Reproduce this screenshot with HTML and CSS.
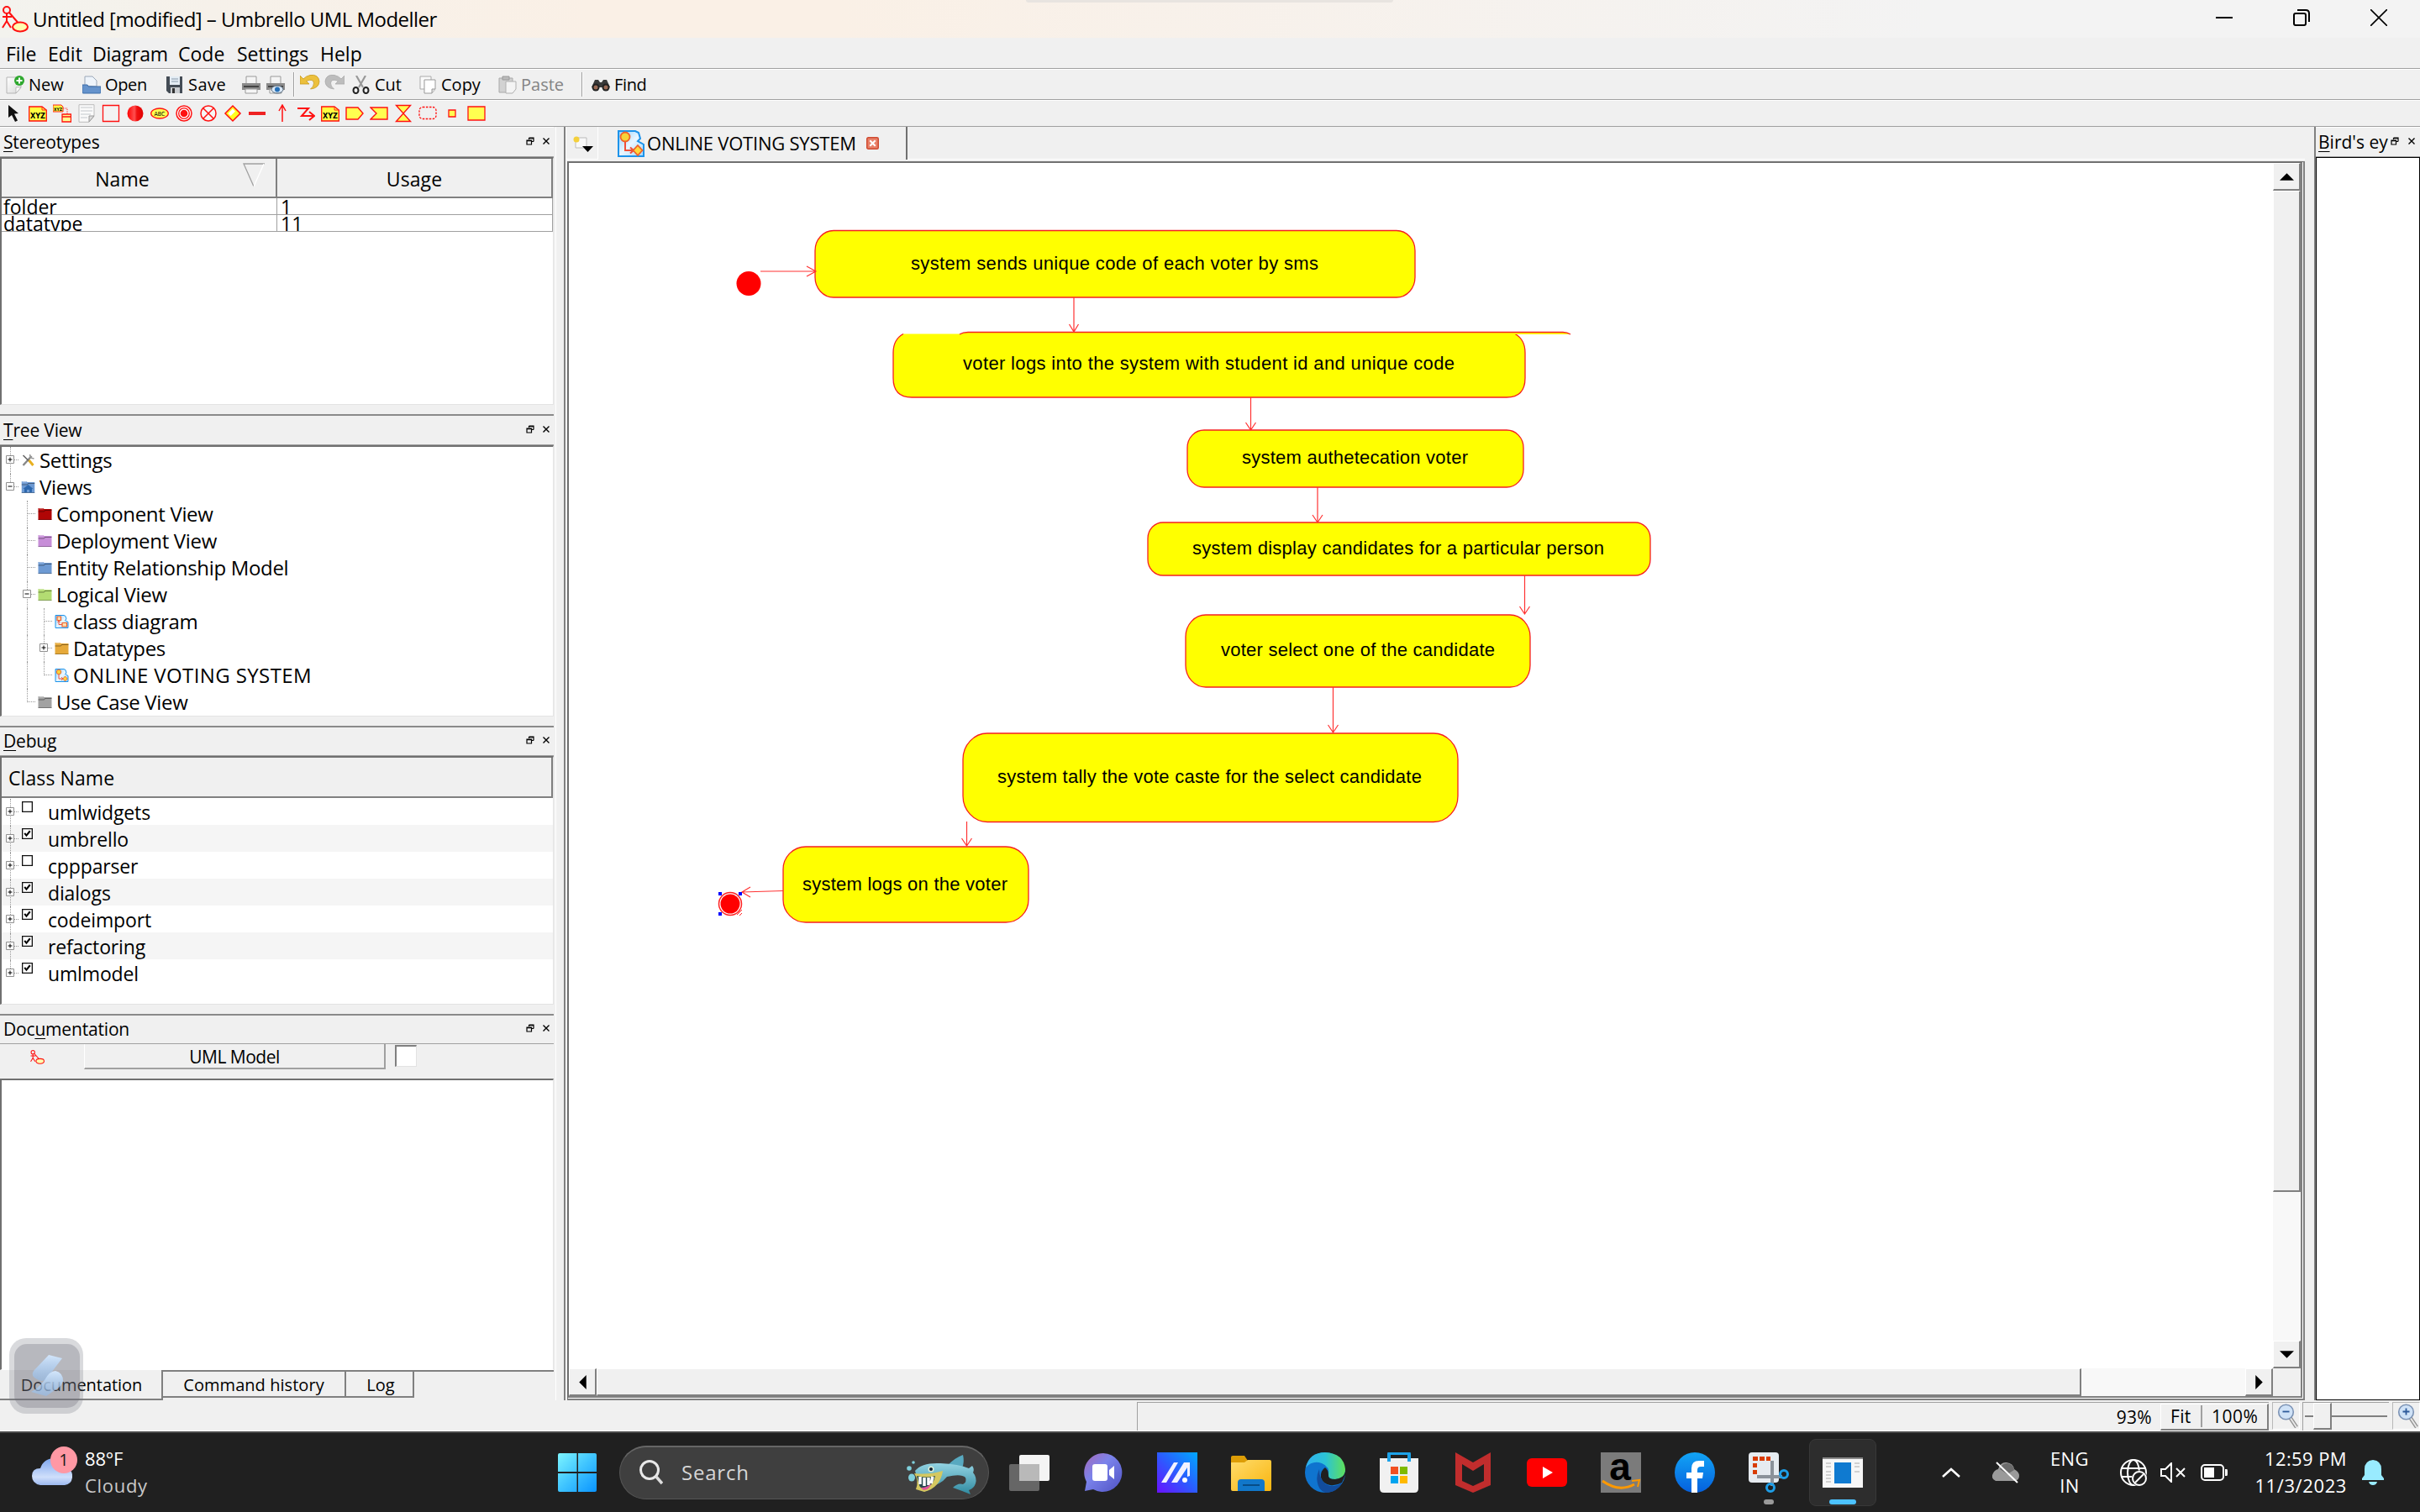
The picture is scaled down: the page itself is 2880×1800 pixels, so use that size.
FILE: index.html
```html
<!DOCTYPE html>
<html lang="en">
<head>
<meta charset="utf-8">
<title>Untitled [modified] – Umbrello UML Modeller</title>
<link rel="stylesheet" href="styles.css">
</head>
<body>
<svg class="defs" width="0" height="0">
  <defs>
    <linearGradient id="blueSheet" x1="0" y1="0" x2="1" y2="1"><stop offset="0" stop-color="#8fd0ff"/><stop offset=".5" stop-color="#eaf6ff"/><stop offset="1" stop-color="#9fd8ff"/></linearGradient>
    <linearGradient id="paper" x1="0" y1="0" x2="1" y2="1"><stop offset="0" stop-color="#fff"/><stop offset="1" stop-color="#d8d8d8"/></linearGradient>
    <linearGradient id="win" x1="0" y1="0" x2="1" y2="1"><stop offset="0" stop-color="#7df5ff"/><stop offset=".5" stop-color="#3fc4ff"/><stop offset="1" stop-color="#0a94ff"/></linearGradient>
    <linearGradient id="cloud" x1="0" y1="0" x2="0" y2="1"><stop offset="0" stop-color="#7ea6ee"/><stop offset=".7" stop-color="#cfdffb"/><stop offset="1" stop-color="#9db9ef"/></linearGradient>
    <linearGradient id="edgeA" x1="0" y1="0" x2="1" y2="0"><stop offset="0" stop-color="#2fb0f0"/><stop offset=".5" stop-color="#2cc3d5"/><stop offset="1" stop-color="#5fe05a"/></linearGradient>
    <linearGradient id="chat" x1="0" y1="0" x2="1" y2="1"><stop offset="0" stop-color="#a768b8"/><stop offset=".4" stop-color="#7b83eb"/><stop offset="1" stop-color="#4f52c4"/></linearGradient>
    <linearGradient id="mm" x1="0" y1="1" x2="1" y2="0"><stop offset="0" stop-color="#6a11ff"/><stop offset=".5" stop-color="#2b5cff"/><stop offset="1" stop-color="#00a8ff"/></linearGradient>
    <linearGradient id="fold" x1="0" y1="0" x2="1" y2="1"><stop offset="0" stop-color="#ffdc6b"/><stop offset="1" stop-color="#f9b50f"/></linearGradient>
    <linearGradient id="fb" x1="0" y1="0" x2="0" y2="1"><stop offset="0" stop-color="#12a4f5"/><stop offset="1" stop-color="#0560dd"/></linearGradient>
    <linearGradient id="fish" x1="0" y1="0" x2="0" y2="1"><stop offset="0" stop-color="#93d3e2"/><stop offset="1" stop-color="#2f8aa0"/></linearGradient>
    <linearGradient id="redball" x1="0" y1="0" x2="1" y2="0"><stop offset="0" stop-color="#f00"/><stop offset=".45" stop-color="#ff5050"/><stop offset=".6" stop-color="#f01010"/><stop offset="1" stop-color="#e00000"/></linearGradient>

    <symbol id="umbrello" viewBox="0 0 32 32"><g fill="none" stroke="#f11" stroke-width="2"><circle cx="6" cy="5" r="4"/><path d="M6 9v10M1 13h11M6 18L1 26M6 18l5 8M9 8L22 23"/><ellipse cx="22" cy="25" rx="9" ry="5.500" fill="#ffffb0"/></g></symbol>
    <symbol id="new" viewBox="0 0 22 22"><path d="M1 2h17v12l-6 7H1z" fill="url(#paper)" stroke="#b5b5b5"/><path d="M18 14l-6 7v-7z" fill="#fff" stroke="#aaa" stroke-width=".7"/><circle cx="16" cy="6" r="6" fill="#2fa82f"/><path d="M16 2.500v7M12.500 6h7" stroke="#fff" stroke-width="2"/></symbol>
    <symbol id="open" viewBox="0 0 22 22"><path d="M3 12V1h9l5 5v7z" fill="#eef4fb" stroke="#9aa7b8"/><path d="M0 11h6l1 2h15v7q0 1-1 1H1q-1 0-1-1z" fill="#6593cc" stroke="#3d6ca8"/></symbol>
    <symbol id="save" viewBox="0 0 22 22"><path d="M1 1h19v20H4l-3-3z" fill="#444c55"/><path d="M5 1h12v10H5z" fill="#e4ecf4"/><path d="M7 4h8M7 7h8" stroke="#89a"/><path d="M6 14h11v7H6z" fill="#c9ccd0"/><path d="M8 15h3v6H8z" fill="#333"/></symbol>
    <symbol id="print" viewBox="0 0 22 22"><path d="M5 1h12v9H5z" fill="#f4f4f4" stroke="#999"/><path d="M0 9h22v8H0z" fill="#8a8a8a"/><path d="M2 12h18v2H2z" fill="#444"/><path d="M4 16h14v5H4z" fill="#f5f5f5" stroke="#999"/></symbol>
    <symbol id="preview" viewBox="0 0 22 22"><use href="#print" width="22" height="22"/><ellipse cx="13" cy="16.500" rx="7" ry="4.500" fill="#d9e7f5" stroke="#567"/><circle cx="13" cy="16.500" r="3" fill="#2670b8"/></symbol>
    <symbol id="undo" viewBox="0 0 24 22"><path d="M0 2v10h11L7.500 8.500Q16 5 16.500 11q0 4-4 7 10-1 10.500-9Q22 0 12 1.500 7 2.500 4 6z" fill="#ecc03c" stroke="#c89a1c" stroke-width=".8"/></symbol>
    <symbol id="redo" viewBox="0 0 24 22"><path d="M24 2v10H13l3.500-3.500Q8 5 7.500 11q0 4 4 7Q1.500 17 1 9 2 0 12 1.500q5 1 8 4.500z" fill="#bdbdbd" stroke="#a8a8a8" stroke-width=".8"/></symbol>
    <symbol id="cut" viewBox="0 0 22 22"><path d="M5 0l8 14M16 0L8 14" stroke="#999" stroke-width="2.200"/><g fill="none" stroke="#222" stroke-width="2"><ellipse cx="4.500" cy="17.500" rx="3" ry="3.500"/><ellipse cx="16.500" cy="17.500" rx="3" ry="3.500"/></g></symbol>
    <symbol id="copy" viewBox="0 0 22 22"><path d="M2 1h13v15H2z" fill="#fafafa" stroke="#aaa"/><path d="M7 5h13v11l-4 5H7z" fill="#fff" stroke="#999"/><path d="M20 16h-4v5" fill="#ddd" stroke="#999"/></symbol>
    <symbol id="paste" viewBox="0 0 22 22"><path d="M1 3h16v17H1z" fill="#d2d2d2" stroke="#aaa"/><path d="M5 1h8v4H5z" fill="#bbb" stroke="#999"/><path d="M9 7h12v9l-4 5H9z" fill="#f4f4f4" stroke="#b0b0b0"/></symbol>
    <symbol id="find" viewBox="0 0 22 22"><path d="M4 5h4l2 3h2l2-3h4l4 9H0z" fill="#3a3a3a"/><circle cx="5" cy="14" r="4.500" fill="#222"/><circle cx="17" cy="14" r="4.500" fill="#222"/><circle cx="5" cy="14" r="2.500" fill="#9a6a55"/><circle cx="17" cy="14" r="2.500" fill="#9a6a55"/></symbol>

    <symbol id="cursor" viewBox="0 0 22 22"><path d="M5 1v15l4-3 4 8 3-1.500-4-8 5-.5z" fill="#111"/></symbol>
    <symbol id="xyz" viewBox="0 0 22 22"><path d="M.7 3h15.300l5.300 4v13H.7z" fill="#ffff40" stroke="#f11" stroke-width="1.300"/><path d="M16 3v4h5" fill="none" stroke="#f22"/><text x="11" y="17" text-anchor="middle" class="glyph-xyz">XYZ</text></symbol>
    <symbol id="xyz2" viewBox="0 0 22 22"><path d="M0 1h10l2 2v6H0z" fill="#ffff40" stroke="#f22"/><text x="6" y="8" text-anchor="middle" class="glyph-mini">XYZ</text><path d="M12 5h5v6" fill="none" stroke="#f22" stroke-dasharray="1 1"/><path d="M11 12h10.500v9H11zM11 15h11" fill="#ffff90" stroke="#f11" stroke-width="1.300"/></symbol>
    <symbol id="note" viewBox="0 0 22 22"><path d="M2 .7h18V14l-6 7.300H2z" fill="#fafafa" stroke="#bbb"/><path d="M4 4h14M4 8h14M4 12h12M4 16h8" stroke="#c4c8cc"/><path d="M20 14l-6 7v-7z" fill="#ddd" stroke="#999"/></symbol>
    <symbol id="rect" viewBox="0 0 22 22"><path d="M1.500 1.500h19v19h-19z" fill="#f3f3f3" stroke="#f11" stroke-width="1.300"/></symbol>
    <symbol id="ball" viewBox="0 0 22 22"><circle cx="11" cy="11" r="9.500" fill="url(#redball)"/></symbol>
    <symbol id="abc" viewBox="0 0 22 22"><ellipse cx="11" cy="11" rx="10.300" ry="6" fill="#ffff50" stroke="#f11" stroke-width="1.300"/><text x="11" y="13.700" text-anchor="middle" class="glyph-abc">ABC</text></symbol>
    <symbol id="target" viewBox="0 0 22 22"><circle cx="11" cy="11" r="9" fill="#fff" stroke="#f11" stroke-width="1.500"/><circle cx="11" cy="11" r="6.300" fill="#fff" stroke="#f11" stroke-width="1.300"/><circle cx="11" cy="11" r="4.300" fill="#f11"/></symbol>
    <symbol id="flowend" viewBox="0 0 22 22"><circle cx="11" cy="11" r="9" fill="#f6f6f6" stroke="#f11" stroke-width="1.500"/><path d="M5 5l12 12M17 5L5 17" stroke="#f11" stroke-width="1.500"/></symbol>
    <symbol id="diamond" viewBox="0 0 22 22"><path d="M11 2l9 9-9 9-9-9z" fill="#ffff20" stroke="#f11" stroke-width="1.500"/><path d="M11 5.500l3 3-5.500 5.500-3-3z" fill="#fff"/></symbol>
    <symbol id="bar" viewBox="0 0 22 22"><path d="M1 9h20v4H1z" fill="#e22"/></symbol>
    <symbol id="uparrow" viewBox="0 0 22 22"><path d="M12 21V1M8 8l4-7 4 7" fill="none" stroke="#f11" stroke-width="1.500"/></symbol>
    <symbol id="zig" viewBox="0 0 22 22"><path d="M1 5h13L6 14h15M15 9l6 5-6 5" fill="none" stroke="#f11" stroke-width="2"/></symbol>
    <symbol id="send" viewBox="0 0 22 22"><path d="M1 4h14l6 7-6 7H1z" fill="#ffff50" stroke="#f11" stroke-width="1.400"/></symbol>
    <symbol id="accept" viewBox="0 0 22 22"><path d="M1 4h20v14H1l7-7z" fill="#ffff50" stroke="#f11" stroke-width="1.400"/></symbol>
    <symbol id="timer" viewBox="0 0 22 22"><path d="M2.500 1.500h17l-17 19h17z" fill="#ffff50" stroke="#f11" stroke-width="1.400"/></symbol>
    <symbol id="region" viewBox="0 0 22 22"><rect x="1" y="3.500" width="20" height="14" rx="4" fill="none" stroke="#f11" stroke-width="1.300" stroke-dasharray="2.500 1.500"/></symbol>
    <symbol id="pin" viewBox="0 0 22 22"><path d="M7 7h8v8H7z" fill="#ffff50" stroke="#f11" stroke-width="1.300"/></symbol>
    <symbol id="objnode" viewBox="0 0 22 22"><path d="M1 3h20v16H1z" fill="#ffff50" stroke="#f11" stroke-width="1.300"/></symbol>

    <symbol id="float" viewBox="0 0 10 10"><path d="M3.500 1h5.500v4.500M3.500 1v2M1 4h5.500v5H1z M1 4.700h5.500M3.500 1.700H9M6.500 5.500H9" fill="none" stroke="#000" stroke-width="1.200"/></symbol>
    <symbol id="x" viewBox="0 0 10 10"><path d="M1.500 1.500l7 7M8.500 1.500l-7 7" stroke="#000" stroke-width="1.400"/></symbol>
    <symbol id="plus" viewBox="0 0 10 10"><path d="M.5.500h9v9h-9z" fill="#fff" stroke="#909090"/><path d="M2.500 5h5M5 2.500v5" stroke="#000"/></symbol>
    <symbol id="minus" viewBox="0 0 10 10"><path d="M.5.500h9v9h-9z" fill="#fff" stroke="#909090"/><path d="M2.500 5h5" stroke="#000"/></symbol>
    <symbol id="folder" viewBox="0 0 16 16"><path d="M0 1h6l1 1h9v13H0z" fill="currentColor"/><path d="M0 5h7l1-1.500h8" stroke="#0006" fill="none"/><path d="M0 14.500h16" stroke="#0004"/><path d="M1 1.800h5" stroke="#fff8"/></symbol>
    <symbol id="home" viewBox="0 0 16 16"><use href="#folder" width="16" height="16"/><path d="M8 5l6 5h-1.500v4h-3v-3h-3v3h-3v-4H2z" fill="#2d68ae"/></symbol>
    <symbol id="tools" viewBox="0 0 16 16"><path d="M2 14L12 3" stroke="#888" stroke-width="2.400"/><path d="M2 2l7 7" stroke="#666" stroke-width="1.600"/><path d="M9 8l5 6" stroke="#e8b020" stroke-width="3"/><path d="M10 1l1 4 4 1" fill="none" stroke="#999" stroke-width="1.500"/></symbol>
    <symbol id="diagram" viewBox="0 0 32 32"><path d="M1 1h20l4 2 2 7-3 3 7 4v14H1z" fill="url(#blueSheet)" stroke="#1d93ea" stroke-width="2"/><circle cx="9" cy="8" r="5.500" fill="#f6d33a" stroke="#f0622a" stroke-width="1.800"/><path d="M9 14v10h9M15 20.500l4 3.500-4 3.500" fill="none" stroke="#f0503a" stroke-width="2"/><path d="M24 18l5.500 6-5.500 6-5.500-6z" fill="#ffd83a" stroke="#f0622a" stroke-width="1.800"/></symbol>
    <symbol id="classdia" viewBox="0 0 32 32"><path d="M1 1h20l4 2 2 7-3 3 7 4v14H1z" fill="url(#blueSheet)" stroke="#1d93ea" stroke-width="2"/><path d="M5 4h9v9H5zM17 19h11v9H17z" fill="#ffe0b0" stroke="#f0622a" stroke-width="2.400"/><path d="M9 13v10h8M6 18l3-4 3 4" fill="none" stroke="#f0503a" stroke-width="2"/></symbol>
    <symbol id="checked" viewBox="0 0 12 12"><path d="M.6.600h10.800v10.800H.6z" fill="#fff" stroke="#111" stroke-width="1.200"/><path d="M3 5.500l2 2.500 4-5" fill="none" stroke="#000" stroke-width="1.900"/></symbol>
    <symbol id="unchecked" viewBox="0 0 12 12"><path d="M.6.600h10.800v10.800H.6z" fill="#fff" stroke="#111" stroke-width="1.200"/></symbol>
  </defs>
</svg>

<div class="window">
  <header class="titlebar">
    <svg class="app-icon"><use href="#umbrello"/></svg>
    <h1 class="title">Untitled [modified] – Umbrello UML Modeller</h1>
    <div class="notch"></div>
    <div class="win-buttons">
      <svg viewBox="0 0 20 20"><path d="M0 10h20" stroke="#000" stroke-width="2"/></svg>
      <svg viewBox="0 0 20 20"><rect x="1" y="5" width="14" height="14" rx="2" fill="none" stroke="#000" stroke-width="2"/><path d="M5 1h10q4 0 4 4v10" fill="none" stroke="#000" stroke-width="2"/></svg>
      <svg viewBox="0 0 20 20"><path d="M0 0l20 20M20 0L0 20" stroke="#000" stroke-width="1.600"/></svg>
    </div>
  </header>

  <nav class="menubar">
    <span class="m-file">File</span><span class="m-edit">Edit</span><span class="m-diagram">Diagram</span><span class="m-code">Code</span><span class="m-settings">Settings</span><span>Help</span>
  </nav>

  <div class="toolbar main-tools">
    <button class="tool w91"><svg><use href="#new"/></svg>New</button>
    <button class="tool w99 tight"><svg><use href="#open"/></svg>Open</button>
    <button class="tool w91 loose"><svg><use href="#save"/></svg>Save</button>
    <button class="tool w29"><svg><use href="#print"/></svg></button>
    <button class="tool w32"><svg><use href="#preview"/></svg></button>
    <i class="sep"></i>
    <button class="tool w29"><svg class="wide"><use href="#undo"/></svg></button>
    <button class="tool w33"><svg class="wide"><use href="#redo"/></svg></button>
    <button class="tool w79"><svg><use href="#cut"/></svg>Cut</button>
    <button class="tool w95"><svg><use href="#copy"/></svg>Copy</button>
    <button class="tool w99 disabled"><svg><use href="#paste"/></svg>Paste</button>
    <i class="sep gap-wide"></i>
    <button class="tool tight"><svg><use href="#find"/></svg>Find</button>
  </div>

  <div class="toolbar diagram-tools">
    <svg><use href="#cursor"/></svg><svg><use href="#xyz"/></svg><svg><use href="#xyz2"/></svg><svg><use href="#note"/></svg><svg><use href="#rect"/></svg><svg><use href="#ball"/></svg><svg><use href="#abc"/></svg><svg><use href="#target"/></svg><svg><use href="#flowend"/></svg><svg><use href="#diamond"/></svg><svg><use href="#bar"/></svg><svg><use href="#uparrow"/></svg><svg><use href="#zig"/></svg><svg><use href="#xyz"/></svg><svg><use href="#send"/></svg><svg><use href="#accept"/></svg><svg><use href="#timer"/></svg><svg><use href="#region"/></svg><svg><use href="#pin"/></svg><svg><use href="#objnode"/></svg>
  </div>

  <main class="workspace">
    <aside class="left">
      <section class="dock stereotypes">
        <h2 class="dock-title"><span><u>S</u>tereotypes</span><svg><use href="#float"/></svg><svg><use href="#x"/></svg></h2>
        <div class="sunken">
          <div class="table">
            <div class="th">Name<svg class="sort" viewBox="0 0 26 29"><path d="M26 1H1l12 27" fill="none" stroke="#a0a0a0" stroke-width="1.300"/><path d="M13 28L25 1" stroke="#fff" stroke-width="1.300"/></svg></div><div class="th">Usage</div>
            <div class="td">folder</div><div class="td num">1</div>
            <div class="td">datatype</div><div class="td num">11</div>
          </div>
        </div>
      </section>

      <section class="dock tree-dock">
        <h2 class="dock-title"><span><u>T</u>ree View</span><svg><use href="#float"/></svg><svg><use href="#x"/></svg></h2>
        <div class="sunken tree">
          <div class="row"><i class="rail run"><svg class="exp"><use href="#plus"/></svg></i><svg class="ico"><use href="#tools"/></svg>Settings</div>
          <div class="row"><i class="rail end"><svg class="exp"><use href="#minus"/></svg></i><svg class="ico c-blue"><use href="#home"/></svg>Views</div>
          <div class="row l2"><i class="rail run"></i><svg class="ico c-red"><use href="#folder"/></svg>Component View</div>
          <div class="row l2"><i class="rail run"></i><svg class="ico c-purple"><use href="#folder"/></svg>Deployment View</div>
          <div class="row l2"><i class="rail run"></i><svg class="ico c-blue"><use href="#folder"/></svg>Entity Relationship Model</div>
          <div class="row l2"><i class="rail run"><svg class="exp"><use href="#minus"/></svg></i><svg class="ico c-green"><use href="#folder"/></svg>Logical View</div>
          <div class="row l3"><i class="rail pass"></i><i class="rail run"></i><svg class="ico"><use href="#classdia"/></svg>class diagram</div>
          <div class="row l3"><i class="rail pass"></i><i class="rail run"><svg class="exp"><use href="#plus"/></svg></i><svg class="ico c-orange"><use href="#folder"/></svg>Datatypes</div>
          <div class="row l3 caps"><i class="rail pass"></i><i class="rail end"></i><svg class="ico"><use href="#diagram"/></svg>ONLINE VOTING SYSTEM</div>
          <div class="row l2"><i class="rail end"></i><svg class="ico c-gray"><use href="#folder"/></svg>Use Case View</div>
        </div>
      </section>

      <section class="dock debug-dock">
        <h2 class="dock-title"><span><u>D</u>ebug</span><svg><use href="#float"/></svg><svg><use href="#x"/></svg></h2>
        <div class="sunken debug">
          <div class="th left-th">Class Name</div>
          <div class="row"><i class="rail run"><svg class="exp"><use href="#plus"/></svg></i><svg class="check"><use href="#unchecked"/></svg>umlwidgets</div>
          <div class="row"><i class="rail run"><svg class="exp"><use href="#plus"/></svg></i><svg class="check"><use href="#checked"/></svg>umbrello</div>
          <div class="row"><i class="rail run"><svg class="exp"><use href="#plus"/></svg></i><svg class="check"><use href="#unchecked"/></svg>cppparser</div>
          <div class="row"><i class="rail run"><svg class="exp"><use href="#plus"/></svg></i><svg class="check"><use href="#checked"/></svg>dialogs</div>
          <div class="row"><i class="rail run"><svg class="exp"><use href="#plus"/></svg></i><svg class="check"><use href="#checked"/></svg>codeimport</div>
          <div class="row"><i class="rail run"><svg class="exp"><use href="#plus"/></svg></i><svg class="check"><use href="#checked"/></svg>refactoring</div>
          <div class="row"><i class="rail end"><svg class="exp"><use href="#plus"/></svg></i><svg class="check"><use href="#checked"/></svg>umlmodel</div>
        </div>
      </section>

      <section class="dock docs-dock">
        <h2 class="dock-title"><span>Doc<u>u</u>mentation</span><svg><use href="#float"/></svg><svg><use href="#x"/></svg></h2>
        <div class="doc-head"><svg class="doc-icon"><use href="#umbrello"/></svg><div class="doc-name">UML Model</div><div class="doc-check"></div></div>
        <div class="sunken doc-text"></div>
        <div class="dock-tabs"><span class="dtab active">Documentation</span><span class="dtab history">Command history</span><span class="dtab log">Log</span></div>
        <div class="float-badge"><svg viewBox="0 0 78 76"><defs><linearGradient id="fl" x1="0" y1="0" x2="0" y2="1"><stop offset="0" stop-color="#d3e6fb"/><stop offset="1" stop-color="#8fbdf0" stop-opacity=".55"/></linearGradient></defs><path d="M41 13l16 4-19 25q-5 4-11 0-8-4-4-10z" fill="url(#fl)"/><path d="M36 43q6-11 13-11 9 2 9 12-1 4-4 7L38 62l-18-5q8-4 16-14z" fill="url(#fl)"/></svg></div>
      </section>
    </aside>

    <section class="center">
      <div class="tabs">
        <div class="newtab"><svg viewBox="0 0 24 20"><path d="M5 2h11v12H3V6" fill="#f8f8f8" stroke="#bbb"/><circle cx="4" cy="4" r="3.500" fill="#f4d03c"/><path d="M11 12h13l-6.500 7z" fill="#000"/></svg></div>
        <div class="tab"><svg class="tab-icon"><use href="#diagram"/></svg><span>ONLINE VOTING SYSTEM</span><svg class="tab-close" viewBox="0 0 14 14"><rect x=".7" y=".7" width="12.600" height="12.600" rx="1.500" fill="#e88068" stroke="#cf4a30" stroke-width="1.400"/><path d="M4 4l6 6M10 4l-6 6" stroke="#fff" stroke-width="2"/></svg></div>
        <div class="tabs-rest"></div>
      </div>
      <div class="view">
        <svg class="canvas" viewBox="677 194 2028 1435">
          <g class="nodes">
            <rect x="970" y="274.500" width="714" height="79.500" rx="22" ry="24"/>
            <path d="M1075 397.500Q1063 404 1063 420V450Q1063 473 1085 473H1793Q1815 473 1815 450V420Q1815 404 1803 397.500"/>
            <rect x="1413" y="512" width="400" height="68" rx="20" ry="21"/>
            <rect x="1366" y="622" width="598" height="63" rx="18" ry="19"/>
            <rect x="1411" y="732" width="410" height="86" rx="24" ry="26"/>
            <rect x="1146" y="873" width="589" height="105.500" rx="29" ry="31"/>
            <rect x="932" y="1008" width="292" height="90" rx="27" ry="27"/>
            <path d="M1142 398Q1146 395.500 1152 395.500H1860Q1865 395.500 1869 398"/>
          </g>
          <g class="edges">
            <path d="M905 323H970M960 317l11 6-11 6"/>
            <path d="M1278 354V395M1272.500 386l5.500 9 5.500-9"/>
            <path d="M1488.500 473V512M1482.500 503l6 9 6-9"/>
            <path d="M1568 580V622M1562 613l6 9 6-9"/>
            <path d="M1814.500 685V731M1808.500 722l6 9 6-9"/>
            <path d="M1586.500 818V873M1580.500 863l6 9 6-9"/>
            <path d="M1150.500 978V1007M1144.500 998l6 9 6-9"/>
            <path d="M932 1060.500L883 1062M893 1056l-10 6 10 6"/>
          </g>
          <circle cx="891" cy="337.500" r="14.500" class="dot"/>
          <circle cx="869" cy="1076" r="13.500" class="ring"/><circle cx="869" cy="1076" r="11.500" class="dot"/>
          <path d="M855 1062h4v4h-4zM879 1062h4v4h-4zM855 1086h4v4h-4z" fill="#00f"/>
          <path d="M877 1089l6-6M880 1090l3-3" stroke="#f22"/>
          <g class="labels">
            <text x="1084" y="320.500" textLength="485">system sends unique code of each voter by sms</text>
            <text x="1146" y="440" textLength="585">voter logs into the system with student id and unique code</text>
            <text x="1478" y="552" textLength="269">system authetecation voter</text>
            <text x="1419" y="660" textLength="490">system display candidates for a particular person</text>
            <text x="1453" y="781" textLength="326">voter select one of the candidate</text>
            <text x="1187" y="932" textLength="505">system tally the vote caste for the select candidate</text>
            <text x="955" y="1060" textLength="244">system logs on the voter</text>
          </g>
        </svg>
        <div class="vbar"><div class="sbtn"><svg viewBox="0 0 18 9"><path d="M0 9h18L9 0z"/></svg></div><div class="vthumb"></div><div class="track"></div><div class="sbtn"><svg viewBox="0 0 18 9"><path d="M0 0h18L9 9z"/></svg></div></div>
        <div class="hbar"><div class="sbtn"><svg class="hz" viewBox="0 0 9 18"><path d="M9 0v18L0 9z"/></svg></div><div class="hthumb"></div><div class="track"></div><div class="sbtn"><svg class="hz" viewBox="0 0 9 18"><path d="M0 0v18l9-9z"/></svg></div></div>
        <div class="corner"></div>
      </div>
    </section>

    <aside class="birds">
      <h2 class="dock-title"><span><u>B</u>ird's ey</span><svg><use href="#float"/></svg><svg><use href="#x"/></svg></h2>
      <div class="birds-view"></div>
    </aside>
  </main>

  <footer class="status">
    <div class="status-msg"></div>
    <div class="status-main"><span class="zoom-now">93%</span>
      <div class="zoom-set"><span class="fit">Fit</span><span class="full">100%</span></div>
    </div>
    <div class="zbtn"><svg viewBox="0 0 26 30"><path d="M15 16l8 12" stroke="#8f8f8f" stroke-width="4.500"/><path d="M15 16l8 12" stroke="#e8e8e8" stroke-width="2"/><circle cx="10.500" cy="10" r="8.800" fill="#cfe2f7" stroke="#7c93b5" stroke-width="1.600"/><path d="M6.500 9.500h8" stroke="#2d5a9a" stroke-width="1.800"/></svg></div>
    <div class="slider"><div class="knob"></div></div>
    <div class="zbtn"><svg viewBox="0 0 26 30"><path d="M15 16l8 12" stroke="#8f8f8f" stroke-width="4.500"/><path d="M15 16l8 12" stroke="#e8e8e8" stroke-width="2"/><circle cx="10.500" cy="10" r="8.800" fill="#cfe2f7" stroke="#7c93b5" stroke-width="1.600"/><path d="M6.500 9.500h8M10.500 5.500v8" stroke="#2d5a9a" stroke-width="1.800"/></svg></div>
  </footer>
</div>

<footer class="taskbar">
  <div class="weather">
    <svg viewBox="0 0 58 50"><path d="M10 46Q0 44 0 35t10-9Q14 14 27 14q12 1 14 12 8 2 7 11-1 8-9 9z" fill="url(#cloud)"/><circle cx="38" cy="16" r="16" fill="#ff98a4"/><text x="38" y="23" text-anchor="middle" class="badge-num">1</text></svg>
    <div class="wtext"><span>88°F</span><span class="dim">Cloudy</span></div>
  </div>
  <svg class="start" viewBox="0 0 46 46"><path d="M0 2q0-2 2-2h20.500v22H0zM24 0h20q2 0 2 2v20H24zM0 24h22.500v22H2q-2 0-2-2zM24 24h22v20q0 2-2 2H24z" fill="url(#win)"/></svg>
  <div class="search">
    <svg class="mag" viewBox="0 0 28 30"><circle cx="12" cy="12" r="10.500" fill="none" stroke="#e8e8e8" stroke-width="3"/><path d="M19.500 19.500L27 28" stroke="#ddd" stroke-width="3.500"/></svg>
    <span>Search</span>
    <svg class="fish" viewBox="0 0 84 48"><path d="M48 14Q58 4 67 1q2 8-1 16z" fill="#58a9c0"/><path d="M10 20Q18 10 40 11q22 1 34 6l4-3q3 4 1 8 5 6 3 13-2 6-8 8l2 5-10-4-11-4q6-6 12-4 5-3 3-8-5-5-22-1-8 10-22 12l-10-2Q14 34 10 20z" fill="url(#fish)"/><path d="M9 23q18 2 34-3-3 20-22 25l-10-3q4-10-2-19z" fill="#d4c860"/><path d="M12 26q14 3 22 0-2 12-13 15-5 0-6-4z" fill="#26494f"/><path d="M16 27v9M21 28v10M26 28v9M31 27l-2 8" stroke="#fff" stroke-width="3.500"/><path d="M17 40q8 0 12-5-1 7-9 8z" fill="#e0559a"/><circle cx="29" cy="18" r="3.500" fill="#ddeed8"/><circle cx="29" cy="18" r="2" fill="#123"/><g fill="#7fd0dc"><ellipse cx="6" cy="28" rx="4" ry="4.500"/><circle cx="3" cy="17" r="2.800"/><circle cx="8" cy="10" r="1.800"/></g></svg>
  </div>
  <div class="apps">
    <div class="app"><svg viewBox="0 0 48 48"><rect x="12" y="3" width="36" height="31" rx="2" fill="#f4f4f4"/><rect x="0" y="14" width="36" height="32" rx="2" fill="#666"/><path d="M12 14h24v20H12z" fill="#b9b9b9"/></svg></div>
    <div class="app"><svg viewBox="0 0 48 48"><path d="M24 1a23 23 0 1 1-12 43l-10 2 2-11A23 23 0 0 1 24 1z" fill="url(#chat)"/><rect x="11" y="14" width="18" height="20" rx="3" fill="#fff"/><path d="M31 21l6-5v16l-6-5z" fill="#fff"/></svg></div>
    <div class="app"><svg viewBox="0 0 48 48"><path d="M0 0h48v48H0z" fill="url(#mm)"/><path d="M5 36L20 12h5L11 36zM17 36L32 12h7v16l-3 1V18L24 36z" fill="#f2f2ff"/><circle cx="33" cy="33" r="3" fill="#fff"/></svg></div>
    <div class="app"><svg viewBox="0 0 48 48"><path d="M0 6q0-2 2-2h14l4 6v4H0z" fill="#dd9d06"/><path d="M0 12h16l4-3h26q2 0 2 2v33q0 2-2 2H2q-2 0-2-2z" fill="url(#fold)"/><path d="M8 46V36q0-4 4-4h24q4 0 4 4v10z" fill="#1177c9"/><path d="M14 39h20" stroke="#074c86" stroke-width="2"/></svg></div>
    <div class="app"><svg viewBox="0 0 48 48"><circle cx="24" cy="24" r="24" fill="#0f74cf"/><path d="M1 18Q5 0 24 0q22 1 24 20 0 11-12 12-9 0-8-5 2-10-8-14Q9 9 1 18z" fill="url(#edgeA)"/><path d="M17 20q-8 18 7 27 12 2 20-10-10 6-19 1-8-5-8-18z" fill="#124c9c"/><path d="M24 18q-6 4-5 12 3 8 11 9 7 1 14-3l4-9v-4q-2 8-12 9-9 0-8-5 0-6-4-9z" fill="#202020"/><path d="M19 30q1 8 9 10 9 2 16-4-6 12-20 12-9-4-9-14z" fill="#124c9c"/></svg></div>
    <div class="app"><svg viewBox="0 0 48 48"><path d="M1 7h46v36q0 5-5 5H6q-5 0-5-5z" fill="#f1f1f1"/><path d="M12 11V2q0-1 1-1h22q1 0 1 1v9" fill="none" stroke="#1da2e8" stroke-width="4"/><path d="M14 17h9v9h-9z" fill="#f25022"/><path d="M25 17h9v9h-9z" fill="#7fba00"/><path d="M14 28h9v9h-9z" fill="#00a4ef"/><path d="M25 28h9v9h-9z" fill="#ffb900"/></svg></div>
    <div class="app"><svg viewBox="0 0 48 48"><path d="M3 0l21 12L45 0v39l-21 9-21-9zM11 14v20l13 6 13-6V14l-13 8z" fill="#c12d2d" fill-rule="evenodd"/></svg></div>
    <div class="app"><svg viewBox="0 0 48 48"><rect y="7" width="48" height="34" rx="6" fill="#f00"/><path d="M19 17l12 7-12 7z" fill="#fff"/></svg></div>
    <div class="app"><svg viewBox="0 0 48 48"><path d="M0 0h48v48H0z" fill="#7b7b7b"/><text x="23" y="33" text-anchor="middle" class="glyph-a">a</text><path d="M2 34q20 14 38 4" fill="none" stroke="#f90" stroke-width="3"/><path d="M37 34l9-1-2 8" fill="none" stroke="#f90" stroke-width="2"/></svg></div>
    <div class="app"><svg viewBox="0 0 48 48"><circle cx="24" cy="24" r="24" fill="url(#fb)"/><path d="M20 48V31h-6v-7h6v-5q0-9 9-9h6v7h-4q-4 0-4 4v3h7l-1 7h-6v17z" fill="#fff"/></svg></div>
    <div class="app open"><svg viewBox="0 0 48 48"><rect width="36" height="36" rx="4" fill="#e6ebf0"/><path d="M5 5h6v5H5zM13 5h6v5h-6zM21 5h5v5h-5zM5 13h5v5H5zM5 21h5v5H5z" fill="#d83b01"/><path d="M10 29h30M28 10v30" stroke="#8b929a" stroke-width="4"/><g fill="none" stroke="#1e9ee8" stroke-width="3"><circle cx="42" cy="26" r="4.500"/><circle cx="26" cy="42" r="4.500"/></g></svg></div>
    <div class="app current"><svg viewBox="0 0 48 48"><path d="M0 6h48v36H0z" fill="#f7f7f7"/><path d="M0 6h48v2H0z" fill="#8a8a8a"/><path d="M14 12h20v25H14z" fill="#0f7ad0"/><path d="M4 13h6M4 17h6M4 23h6M4 27h6M4 31h6M4 35h6M38 13h6M38 17h6M38 23h6" stroke="#aaa"/></svg></div>
  </div>
  <div class="tray">
    <svg class="chev" viewBox="0 0 22 12"><path d="M1 11L11 2l10 9" fill="none" stroke="#fff" stroke-width="2.500"/></svg>
    <svg class="sync" viewBox="0 0 32 28"><path d="M4 24q-5-2-4-7 2-6 7-7Q10 1 17 2q8 1 9 8 6 3 6 8t-5 6z" fill="#9a9a9a"/><path d="M9 10q3-8 9-7 7 1 8 8l-8 5z" fill="#6b6b6b"/><path d="M5 2l25 24" stroke="#fff" stroke-width="2"/></svg>
    <div class="lang"><span>ENG</span><span>IN</span></div>
    <svg class="globe" viewBox="0 0 32 32"><g fill="none" stroke="#fff" stroke-width="2"><circle cx="16" cy="16" r="15"/><ellipse cx="16" cy="16" rx="7" ry="15"/><path d="M2 11h28M2 21h28"/></g><circle cx="23" cy="23" r="9.500" fill="#202020"/><circle cx="23" cy="23" r="8" fill="none" stroke="#fff" stroke-width="2"/><path d="M18 28l10-10" stroke="#fff" stroke-width="2"/></svg>
    <svg class="spk" viewBox="0 0 30 24"><path d="M1 8h5l7-7v22l-7-7H1zM19 7l10 10M29 7L19 17" fill="none" stroke="#fff" stroke-width="2"/></svg>
    <svg class="batt" viewBox="0 0 32 20"><rect x="1" y="1" width="26" height="18" rx="4" fill="none" stroke="#fff" stroke-width="2"/><path d="M4 4h12v12H4zM29 6h2q1 0 1 2v4q0 2-1 2h-2z" fill="#fff"/></svg>
    <div class="clock"><span>12:59 PM</span><span class="date">11/3/2023</span></div>
    <svg class="bell" viewBox="0 0 26 30"><path d="M13 0q10 1 10 11v7l3 4v2H0v-2l3-4v-7Q3 1 13 0zM8 26h10q-1 4-5 4t-5-4z" fill="#99ebff"/></svg>
  </div>
</footer>
</body>
</html>
```
FILE: styles.css
```css
* { box-sizing: border-box; }
html, body { margin: 0; }
body {
  width: 2880px; height: 1800px; overflow: hidden;
  display: flex; flex-direction: column;
  background: #f0f0f0; color: #000;
  font-family: "Open Sans", "Noto Sans", sans-serif; font-size: 24px; line-height: 1;
}
svg { display: block; flex: none; }
.defs { position: absolute; }
h1, h2 { margin: 0; font-weight: 400; }
button { border: 0; background: none; padding: 0; margin: 0; font: inherit; color: inherit; }
.window { height: 1704px; display: flex; flex-direction: column; }

/* title bar */
.titlebar { position: relative; height: 45px; display: flex; align-items: center; background: linear-gradient(90deg, #f3f3ee 0, #f6f1ea 250px, #faf0e6 700px, #faf0e6 1000px, #f3f3f3 2300px); }
.app-icon { width: 36px; height: 32px; }
.title { margin-left: 3px; font-size: 24px; letter-spacing: -.53px; flex: 1; line-height: 46px; }
.notch { position: absolute; left: 1221px; top: 0; width: 437px; height: 3px; background: #e8e4e0; border-radius: 0 0 4px 4px; }
.win-buttons { display: flex; gap: 72px; padding-right: 39px; }
.win-buttons svg { width: 20px; height: 20px; margin-top: -3px; }

.menubar { height: 37px; display: flex; padding-left: 7px; font-size: 23px; line-height: 39px; border-bottom: 1px solid #a0a0a0; }
.m-file { width: 50px; } .m-edit { width: 53px; } .m-diagram { width: 102px; letter-spacing: -.2px; } .m-code { width: 70px; } .m-settings { width: 99px; }

.toolbar { border-top: 1px solid #fff; border-bottom: 1px solid #a0a0a0; display: flex; align-items: center; }
.main-tools { height: 37px; padding-left: 7px; font-size: 20px; }
.tool { display: flex; align-items: center; gap: 5px; line-height: 36px; text-align: left; }
.tool.tight { letter-spacing: -.35px; }
.tool.loose { letter-spacing: .5px; }
.tool svg { width: 22px; height: 22px; }
.tool svg.wide { width: 24px; margin-top: -3px; }
.disabled { color: #838383; }
.w29 { width: 29px; } .w32 { width: 32px; } .w33 { width: 33px; } .w79 { width: 79px; }
.w91 { width: 91px; } .w95 { width: 95px; } .w99 { width: 99px; }
.sep { width: 2px; height: 29px; margin-right: 6px; background: #a0a0a0; border-right: 1px solid #fff; }
.gap-wide { margin-right: 10px; }
.diagram-tools { height: 32px; padding-left: 5px; gap: 7px; }
.diagram-tools svg { width: 22px; height: 22px; }
.glyph-xyz { font: bold 9px "DejaVu Sans Condensed", sans-serif; }
.glyph-mini { font: bold 5px "DejaVu Sans Condensed", sans-serif; }
.glyph-abc { font: 7px "DejaVu Sans Condensed", sans-serif; }

/* docks */
.workspace { height: 1516px; display: grid; grid-template-columns: 661px 2082px 137px; }
.left { border-right: 1px solid #fff; display: grid; grid-template-rows: 342px 371px 343px 460px; width: 662px; }
.dock { display: flex; flex-direction: column; padding-bottom: 11px; width: 659px; }
.dock-title { height: 36px; flex: none; display: flex; align-items: center; gap: 9px; padding: 0 4px; font-size: 21px; letter-spacing: -.18px; line-height: 35px; border-top: 1px solid #fff; border-bottom: 1px solid #a0a0a0; }
.dock-title span { flex: 1; min-width: 0; }
.dock-title svg { width: 10px; height: 10px; margin-top: -3px; }
.dock-title u { text-underline-offset: 3px; text-decoration-thickness: 1px; }
.tree-dock .dock-title, .debug-dock .dock-title, .docs-dock .dock-title { border-top: 2px solid #8a8a8a; }
.tree-dock .dock-title { height: 37px; }
.sunken { flex: 1; background: #fff; border: 2px solid #707070; border-right: 1px solid #e3e3e3; border-bottom: 1px solid #e3e3e3; overflow: hidden; }

.table { display: grid; grid-template-columns: 328px 328px; grid-template-rows: 47px 20px 20px; }
.th { display: flex; align-items: center; justify-content: center; background: #f0f0f0; font-size: 23px; letter-spacing: .1px; border-right: 2px solid #808080; border-bottom: 2px solid #808080; position: relative; line-height: 45px; padding: 3px 39px 0 0; }
.th + .th { padding-right: 0; }
.sort { position: absolute; left: 287px; top: 5px; width: 26px; height: 29px; }
.td { font-size: 23px; line-height: 21px; overflow: hidden; padding-left: 2px; border-right: 1px solid #a0a0a0; border-bottom: 1px solid #a0a0a0; }
.num { padding-left: 4px; }

.row { height: 32px; display: flex; align-items: center; letter-spacing: -.32px; line-height: 30px; white-space: nowrap; font-size: 24px; }
.row.caps { letter-spacing: .39px; }
.rail { width: 23px; height: 32px; flex: none; position: relative; display: block; }
.rail::before { content: ""; position: absolute; left: 10px; top: 0; bottom: 0; border-left: 1px dotted #999; }
.rail.end::before { bottom: 16px; }
.rail::after { content: ""; position: absolute; left: 10px; right: 3px; top: 15px; border-top: 1px dotted #999; }
.rail.pass { width: 20px; }
.rail.pass::after { display: none; }
.exp { position: absolute; z-index: 1; left: 5px; top: 10px; width: 10px; height: 10px; }
.tree .ico { width: 17px; height: 16px; margin-right: 5px; }
.l2, .l3 { padding-left: 20px; }
.c-red { color: #b00505; } .c-purple { color: #c78ed8; } .c-blue { color: #6e9ad3; } .c-green { color: #b3dc72; } .c-orange { color: #e6a93a; } .c-gray { color: #a2a2a2; }

.left-th { height: 48px; justify-content: flex-start; padding-left: 8px; }
.debug .row { letter-spacing: -.15px; font-size: 23px; line-height: 34px; padding-top: 1px; }
.debug .row:nth-child(odd) { background: #f5f5f5; }
.check { width: 13px; height: 13px; align-self: flex-start; margin: 3px 18px 0 1px; }

.docs-dock { position: relative; padding: 0; }
.doc-head { height: 41px; display: flex; align-items: flex-start; padding-left: 35px; }
.doc-icon { width: 19px; height: 17px; margin-top: 7px; }
.doc-name { width: 359px; height: 30px; margin-left: 46px; font-size: 21px; letter-spacing: -.5px; line-height: 30px; text-align: center; border: 1px solid #a0a0a0; border-width: 0 2px 2px 1px; border-left-color: #fff; }
.doc-check { width: 26px; height: 26px; margin: 1px 0 0 11px; background: #fff; border: 2px solid #808080; border-right: 1px solid #e3e3e3; border-bottom: 1px solid #e3e3e3; }
.doc-text { border-bottom-color: #fff; }
.dock-tabs { height: 36px; display: flex; align-items: flex-start; font-size: 20px; letter-spacing: .05px; }
.dtab { height: 33px; line-height: 32px; border: 2px solid #808080; border-left: 0; text-align: center; }
.dtab.active { width: 194px; height: 36px; line-height: 36px; border-top: 0; padding-left: 2px; letter-spacing: -.05px; }
.dtab.history { width: 218px; } .dtab.log { width: 81px; padding-left: 3px; }
.dock-tabs::after { content: ""; flex: 1; border-top: 2px solid #808080; }
.float-badge { position: absolute; left: 11px; top: 386px; width: 88px; height: 90px; border-radius: 20px; background: #70758044; padding: 7px 5px 7px 6px; z-index: 2; }
.float-badge svg { width: 78px; height: 76px; border-radius: 15px; background: #6a6b784d; }

/* document area */
.center { margin-left: 10px; border-left: 2px solid #808080; display: flex; flex-direction: column; width: 2072px; box-shadow: inset 1px 0 #fff; }
.tabs { height: 41px; display: flex; padding-bottom: 2px; }
.newtab { width: 38px; padding: 11px 0 0 9px; border-bottom: 1px solid #fff; }
.newtab svg { width: 24px; height: 20px; }
.tab { width: 369px; display: flex; align-items: center; padding-left: 23px; border-left: 1px solid #fff; border-right: 2px solid #707070; font-size: 22px; letter-spacing: -.22px; line-height: 39px; }
.tab-icon { width: 32px; height: 32px; margin-right: 3px; }
.tab-close { width: 15px; height: 15px; margin-left: 12px; }
.tabs-rest { flex: 1; border-bottom: 1px solid #fff; }
.view { flex: 1; margin-left: 2px; border: 2px solid #707070; border-right: 5px double #808080; border-bottom: 5px double #808080; display: grid; grid-template-columns: 2028px 1fr; grid-template-rows: 1435px 1fr; background: #fff; }
.canvas { width: 2028px; height: 1435px; background: #fff; }
.nodes { fill: #ff0; stroke: #f52020; stroke-width: 1.300; }
.edges { fill: none; stroke: #f33; stroke-width: 1.200; }
.dot { fill: #f00; }
.ring { fill: #fff; stroke: #f22; stroke-width: 1.500; }
.labels { font: 22px "Liberation Sans", Arial, sans-serif; }
.vbar { display: flex; flex-direction: column; }
.hbar { display: flex; }
.sbtn, .vthumb, .hthumb { background: #f0f0f0; border: 1px solid #fff; border-right: 2px solid #808080; border-bottom: 2px solid #808080; }
.sbtn { display: flex; align-items: center; justify-content: center; width: 33px; height: 33px; }
.sbtn svg { width: 17px; height: 9px; }
.sbtn svg.hz { width: 9px; height: 17px; }
.vbar .sbtn { width: 100%; }
.hbar .sbtn { height: 100%; }
.vthumb { height: 1192px; }
.hthumb { width: 1767px; }
.track { flex: 1; background: #f8f8f8; }
.corner { background: #f0f0f0; }

.birds { margin-left: 11px; width: 126px; border-left: 2px solid #808080; display: flex; flex-direction: column; }
.birds .dock-title { padding: 0 5px 0 3px; gap: 10px; letter-spacing: 0; }
.birds .dock-title span { white-space: nowrap; }
.birds-view { flex: 1; background: #fff; border: 1px solid #000; }

/* status bar */
.status { height: 37px; display: flex; padding-top: 2px; border-bottom: 1px solid #fff; }
.status-msg { width: 1353px; }
.status-main { flex: 1; display: flex; align-items: center; justify-content: flex-end; border-left: 1px solid #a0a0a0; border-top: 1px solid #a0a0a0; letter-spacing: .3px; font-size: 21px; }
.zoom-now { margin-right: 10px; line-height: 36px; }
.zoom-set { display: flex; align-items: center; width: 129px; height: 32px; border: 1px solid #fff; border-right: 2px solid #808080; border-bottom: 2px solid #808080; line-height: 32px; }
.fit { width: 49px; padding-left: 11px; border-right: 2px solid #a0a0a0; line-height: 26px; }
.full { padding-left: 11px; letter-spacing: .5px; }
.zbtn { width: 33px; height: 33px; margin-left: 4px; padding: 1px 0 0 5px; border: 1px solid #b8b8b8; border-right-color: #fff; border-bottom-color: #fff; }
.zbtn svg { width: 26px; height: 30px; }
.slider { width: 103px; margin-left: 3px; border-left: 1px solid #a0a0a0; border-top: 1px solid #a0a0a0; background: linear-gradient(#808080, #808080) 2px 15px / 98px 2px no-repeat; }
.knob { width: 22px; height: 32px; margin-left: 12px; background: #f0f0f0; border: 1px solid #fff; border-right: 2px solid #808080; border-bottom: 2px solid #808080; }

/* taskbar */
.taskbar { height: 96px; background: #202020; border-top: 2px solid #4a4a4a; color: #fff; display: flex; align-items: center; font-size: 22px; padding-bottom: 1px; }
.weather { display: flex; width: 664px; padding-left: 38px; align-items: center; gap: 5px; }
.weather svg { width: 58px; height: 50px; margin-top: -12px; }
.badge-num { font: 20px "Open Sans", sans-serif; fill: #1a1a1a; }
.wtext, .lang, .clock { display: flex; flex-direction: column; line-height: 32px; letter-spacing: .4px; margin-top: -1px; }
.wtext { letter-spacing: -.2px; }
.dim { color: #c8c8c8; letter-spacing: .7px; }
.start { width: 46px; height: 46px; }
.search { width: 440px; height: 64px; margin-left: 27px; border-radius: 32px; background: #3f3f3f; border: 1px solid #555; border-top: 2px solid #666; display: flex; align-items: center; padding: 0 13px 0 23px; font-size: 24px; letter-spacing: .8px; color: #d6d6d6; }
.search span { flex: 1; margin-left: 22px; line-height: 64px; }
.mag { width: 28px; height: 30px; }
.fish { width: 84px; height: 48px; margin-top: 4px; }
.apps { display: flex; gap: 8px; margin-left: 8px; }
.app { position: relative; width: 80px; height: 80px; padding: 16px; border-radius: 8px; }
.app svg { width: 48px; height: 48px; }
.open::after, .current::after { content: ""; position: absolute; bottom: 2px; left: 34px; width: 12px; height: 6px; border-radius: 3px; background: #9a9a9a; }
.current { background: #2d2d2d; border: 1px solid #383838; padding: 15px; }
.current::after { left: 23px; width: 32px; bottom: 1px; background: #4cc2ff; }
.glyph-a { font: bold 46px "Liberation Sans", sans-serif; }
.tray { display: flex; align-items: center; margin-left: 78px; }
.chev { width: 22px; height: 14px; }
.sync { width: 32px; height: 28px; margin-left: 38px; }
.lang { width: 46px; margin-left: 37px; align-items: center; }
.globe { width: 32px; height: 32px; margin-left: 37px; }
.spk { width: 30px; height: 24px; margin-left: 16px; }
.batt { width: 32px; height: 20px; margin-left: 18px; }
.clock { width: 112px; margin-left: 30px; align-items: flex-end; }
.date { letter-spacing: .6px; }
.bell { width: 26px; height: 30px; margin-left: 18px; }
```
